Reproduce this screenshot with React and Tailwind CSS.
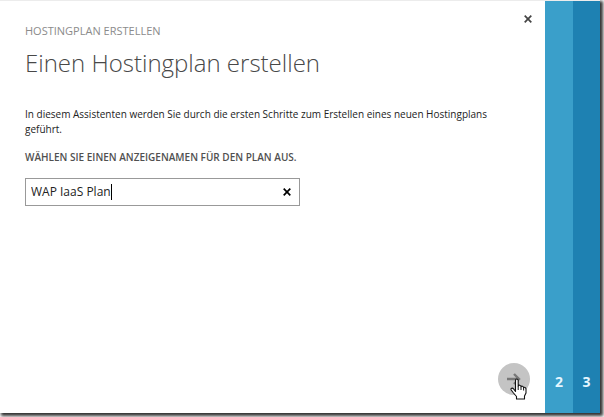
import { useState } from "react";

function CrossIcon({ className }) {
  return (
    <svg viewBox="0 0 8 8" className={className} fill="none" stroke="currentColor" strokeWidth="1.7" aria-hidden="true">
      <path d="M0.7 0.7 7.3 7.3M7.3 0.7 0.7 7.3" />
    </svg>
  );
}

function HandCursor() {
  return (
    <svg viewBox="0 0 17 22" className="pointer-events-none absolute top-[15px] left-3 h-[22px] w-[17px]" aria-hidden="true">
      <path
        d="M5.5 13.5V2.5Q5.5 1 6.8 1T8.2 2.5V8Q8.5 7 9.7 7.2T11 8.8Q11.3 7.9 12.4 8.2T13.6 9.7Q14 9 15 9.4T16 11V15L14.5 18V21H6.5V18.5L3.5 15 1.2 12Q0.6 10.8 1.6 10.3T3.8 11.2Z"
        fill="#fff"
        stroke="#111"
        strokeWidth="1.1"
        strokeLinejoin="round"
      />
      <path d="M8.2 8V12M11 9V12M13.6 10V12.5" fill="none" stroke="#111" />
    </svg>
  );
}

export default function App() {
  const [name, setName] = useState("WAP IaaS Plan");

  return (
    <div className="h-screen bg-white pr-1 pb-1 font-['Open_Sans','Noto_Sans',sans-serif]">
      <div className="flex h-full border-t border-[#ececec] bg-white shadow-[2px_2px_3px_1px_#333]">
        <main className="flex min-w-0 flex-1 flex-col">
          <header className="flex items-start justify-between pt-[10px] pr-[9px] pl-[25px]">
            <div className="pt-[11px]">
              <p className="text-[11px] leading-[18px] font-medium text-[#8b8b8b]">HOSTINGPLAN ERSTELLEN</p>
              <h1 className="mt-1 text-[24px] leading-[38px] font-light text-[#484848]">Einen Hostingplan erstellen</h1>
            </div>
            <button type="button" aria-label="Schließen" className="flex size-4 items-center justify-center text-[#444]">
              <CrossIcon className="size-2" />
            </button>
          </header>
          <form className="pt-[25px] pr-9 pl-[25px]">
            <p className="text-[10px] leading-[15px] text-[#222]">
              In diesem Assistenten werden Sie durch die ersten Schritte zum Erstellen eines neuen Hostingplans geführt.
            </p>
            <label htmlFor="plan" className="mt-[13px] block text-[10px] leading-[15px] font-semibold text-[#505050]">
              WÄHLEN SIE EINEN ANZEIGENAMEN FÜR DEN PLAN AUS.
            </label>
            <div className="mt-[13px] flex h-7 w-[275px] items-center border border-[#999] pr-2 pl-[5px]">
              <div className="flex min-w-0 flex-1 items-center">
                <input
                  id="plan"
                  value={name}
                  onChange={(e) => setName(e.target.value)}
                  className="field-sizing-content max-w-full border-r border-black bg-transparent text-[12px] leading-[16px] text-[#222] outline-none"
                />
              </div>
              <button type="button" aria-label="Löschen" onClick={() => setName("")} className="text-black">
                <CrossIcon className="size-2" />
              </button>
            </div>
          </form>
          <footer className="mt-auto flex justify-end pr-[15px] pb-[18px]">
            <button type="button" aria-label="Weiter" className="relative flex size-8 items-center justify-center rounded-full bg-[#c4c4c4]">
              <svg viewBox="0 0 14 12" className="h-3 w-[14px]" fill="none" stroke="#777" strokeWidth="2.4" aria-hidden="true">
                <path d="M0 6H12M7 1 12 6 7 11" />
              </svg>
              <HandCursor />
            </button>
          </footer>
        </main>
        <nav aria-label="Schritte" className="flex text-[14px] leading-[18px] font-bold text-[#e4f6ff]">
          <button type="button" className="flex w-7 items-end justify-center bg-[#3a9fca] pb-[22px]">2</button>
          <button type="button" className="flex w-[27px] items-end justify-center bg-[#1e81b2] pb-[22px]">3</button>
        </nav>
      </div>
    </div>
  );
}
